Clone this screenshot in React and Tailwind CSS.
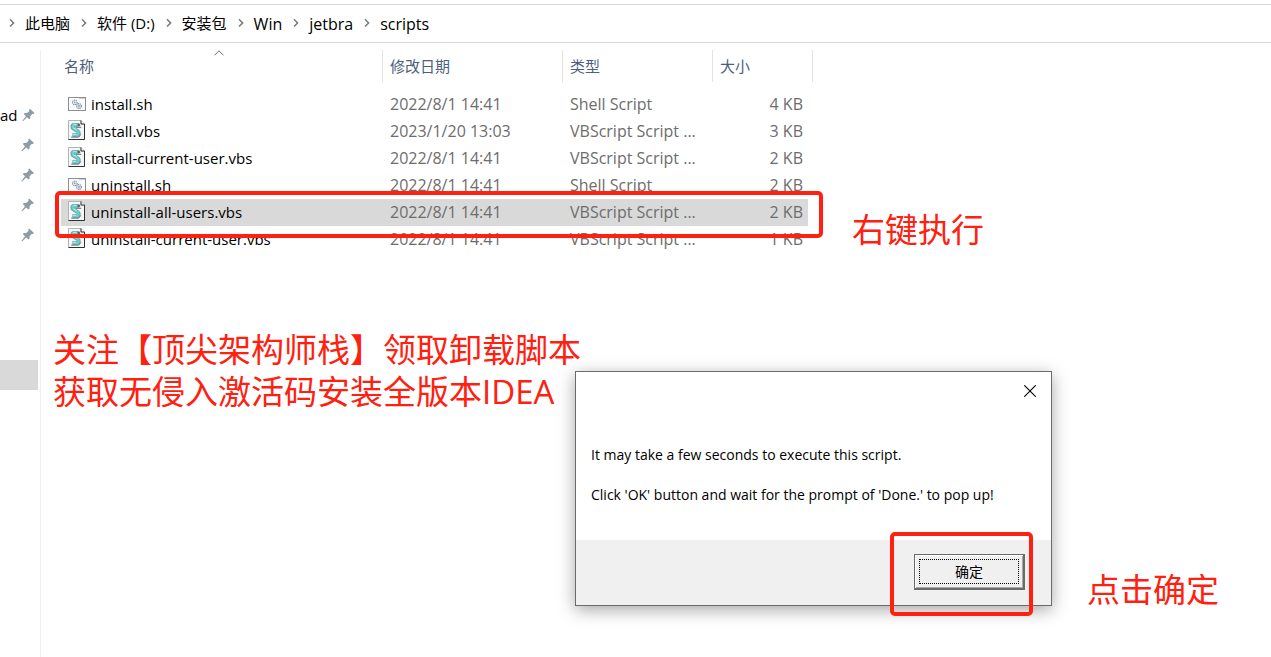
const FILES = [
  { name: 'install.sh', date: '2022/8/1 14:41', type: 'Shell Script', size: '4 KB', kind: 'sh' },
  { name: 'install.vbs', date: '2023/1/20 13:03', type: 'VBScript Script ...', size: '3 KB', kind: 'vbs' },
  { name: 'install-current-user.vbs', date: '2022/8/1 14:41', type: 'VBScript Script ...', size: '2 KB', kind: 'vbs' },
  { name: 'uninstall.sh', date: '2022/8/1 14:41', type: 'Shell Script', size: '2 KB', kind: 'sh' },
  { name: 'uninstall-all-users.vbs', date: '2022/8/1 14:41', type: 'VBScript Script ...', size: '2 KB', kind: 'vbs', selected: true },
  { name: 'uninstall-current-user.vbs', date: '2022/8/1 14:41', type: 'VBScript Script ...', size: '1 KB', kind: 'vbs' },
];

const CRUMBS = [
  { label: '此电脑', size: 'text-[15px]' },
  { label: '软件 (D:)', size: 'text-[15px]' },
  { label: '安装包', size: 'text-[15px]' },
  { label: 'Win', size: 'text-base' },
  { label: 'jetbra', size: 'text-base' },
  { label: 'scripts', size: 'text-base' },
];
const PINS = ['ad', '', '', '', ''];

function Chevron() {
  return (
    <svg className="h-3 w-[27px] shrink-0" viewBox="0 0 27 12" fill="none" stroke="#7a7a7a" strokeWidth="1.5" aria-hidden="true">
      <path d="M12 1.2 L15.6 4.9 L12 8.6" />
    </svg>
  );
}

function PinIcon() {
  return (
    <svg className="h-[14px] w-[14px]" viewBox="0 0 14 14" fill="#8f9ba5" aria-hidden="true">
      <path d="M8.2 0.6 L13 5 L11.8 6 L10.6 5.9 L8.6 8.2 L8.6 10.6 L7.5 11.5 L5.2 9.4 L1 13.4 L0.4 13 L4 8.2 L1.8 6 L2.8 5 L5.2 5 L7.6 2.8 L7.3 1.5 Z" />
    </svg>
  );
}

function ShellIcon() {
  return (
    <svg className="h-[23px] w-5" viewBox="0 0 20 23" fill="none" aria-hidden="true">
      <rect x="0.5" y="4.5" width="17" height="13" fill="#fbfbfb" stroke="#8a8f94" />
      <path d="M11.5 5.5h1M13.5 5.5h1M15.5 5.5h1" stroke="#9a9fa4" />
      <circle cx="6.8" cy="9.4" r="2.3" fill="#eef3f7" stroke="#7d8994" strokeDasharray="1.2 0.6" strokeWidth="1.1" />
      <circle cx="6.8" cy="9.4" r="0.8" fill="#8a97a3" />
      <circle cx="11" cy="13" r="2.4" fill="#dcebf7" stroke="#788ca0" strokeDasharray="1.2 0.6" strokeWidth="1.1" />
      <circle cx="11" cy="13" r="0.8" fill="#6c8299" />
    </svg>
  );
}

function VbsIcon() {
  return (
    <svg className="h-[23px] w-5" viewBox="0 0 20 23" fill="none" aria-hidden="true">
      <path d="M0.5 0.5 H13 L16.5 4 V19.5 H0.5 Z" fill="#f5f6f6" stroke="#b3b3b3" />
      <path d="M13 0.5 V4 H16.5" fill="#ffffff" stroke="#222222" />
      <path d="M16.5 4 V19.5 H0.5" stroke="#333333" />
      <path d="M11.4 4.8 H6 C3.8 5 3.8 7.6 5.6 8.6 L9.8 11.2 C11.4 12.6 11 14.2 9.6 14.8 H4.4" stroke="#7d9a9b" strokeWidth="3.8" />
      <path d="M10.4 4.8 H6 C4.2 5 4.2 7.4 5.8 8.4 L9.8 11 C11 12.4 10.8 14 9.6 14.8 H4.4" stroke="#5ed6d8" strokeWidth="2.3" />
      <path d="M5.4 4.3 H8.4 M5.4 7.8 L8.6 9.8 M4.6 14.2 H8.4" stroke="#c6f4f4" strokeWidth="0.9" />
      <path d="M7.6 7.3 H13.2 M3.2 17.1 H10.8 L12.8 14.4" stroke="#5d6f70" strokeWidth="1" />
      <path d="M9.6 5 H12.2" stroke="#34484a" strokeWidth="1.4" />
    </svg>
  );
}

function HeaderCell({ children, sorted, inset }) {
  return (
    <th scope="col" className="relative h-12 p-0 align-top font-normal">
      <div className={`mt-[7px] flex h-8 items-center border-r border-[#e2e2e2] text-left text-[15px] text-[#4c607a] ${inset}`}>
        {children}
      </div>
      {sorted && (
        <svg className="absolute top-[7px] left-[153px] h-[6px] w-[10px]" viewBox="0 0 10 6" fill="none" stroke="#6c6c6c" aria-hidden="true">
          <path d="M0.5 5.3 L5 0.8 L9.5 5.3" />
        </svg>
      )}
    </th>
  );
}

function FileTable() {
  return (
    <table className="w-[752px] table-fixed border-collapse text-base leading-[27px] text-[#6d6d6d]">
      <colgroup>
        <col className="w-[322px]" />
        <col className="w-[180px]" />
        <col className="w-[150px]" />
        <col className="w-[100px]" />
      </colgroup>
      <thead>
        <tr>
          <HeaderCell sorted inset="pl-[3px]">名称</HeaderCell>
          <HeaderCell inset="pl-[7px]">修改日期</HeaderCell>
          <HeaderCell inset="pl-[7px]">类型</HeaderCell>
          <HeaderCell inset="pl-[7px]">大小</HeaderCell>
        </tr>
      </thead>
      <tbody>
        {FILES.map((f) => {
          const bg = f.selected ? 'bg-[#d9d9d9]' : '';
          return (
            <tr key={f.name}>
              <td className={`p-0 ${bg}`}>
                <div className="flex h-[27px] items-center gap-[3px] pl-[7px] text-[15px] text-black">
                  {f.kind === 'sh' ? <ShellIcon /> : <VbsIcon />}
                  <span>{f.name}</span>
                </div>
              </td>
              <td className={`p-0 pl-[7px] ${bg}`}>{f.date}</td>
              <td className={`p-0 pl-[7px] ${bg}`}>{f.type}</td>
              <td className="p-0 pr-[5px]">
                <div className={`h-[27px] pr-[5px] text-right ${bg}`}>{f.size}</div>
              </td>
            </tr>
          );
        })}
      </tbody>
    </table>
  );
}

function Dialog() {
  return (
    <div
      role="dialog"
      aria-label="Script message"
      className="absolute top-[371px] left-[575px] flex w-[477px] flex-col border border-[#6b6b6b] bg-white shadow-[0_4px_16px_rgba(0,0,0,0.35)]"
    >
      <div className="flex justify-end px-[15px] pt-[13px]">
        <button type="button" aria-label="Close" className="h-3 w-3">
          <svg className="h-3 w-3" viewBox="0 0 12 12" stroke="#000000" strokeWidth="1.1" aria-hidden="true">
            <path d="M0.3 0.3 L11.7 11.7 M11.7 0.3 L0.3 11.7" />
          </svg>
        </button>
      </div>
      <div className="flex flex-col gap-5 px-[15px] pt-[48px] pb-[35px] text-sm leading-5 font-medium text-black">
        <p>It may take a few seconds to execute this script.</p>
        <p>Click 'OK' button and wait for the prompt of 'Done.' to pop up!</p>
      </div>
      <div className="flex justify-end bg-[#f0f0f0] pt-[14px] pr-[26px] pb-[15px]">
        <button
          type="button"
          className="h-9 w-[111px] border border-r-2 border-b-2 border-[#6b6b6b] bg-[#f0f0f0] p-1 text-sm text-black shadow-[inset_1px_1px_0_#ffffff,inset_-1px_-1px_0_#a8a8a8]"
        >
          <span className="flex h-full items-center justify-center border border-dotted border-black">确定</span>
        </button>
      </div>
    </div>
  );
}

export default function App() {
  return (
    <div className="relative flex min-h-screen flex-col overflow-hidden bg-white font-['Open_Sans','Noto_Sans_CJK_SC',sans-serif] text-black">
      <nav aria-label="Path" className="mt-1 -ml-0.5 flex h-[39px] items-center border-y border-[#d9d9d9]">
        {CRUMBS.map((c) => (
          <div key={c.label} className="flex items-center">
            <Chevron />
            <a href="#" className={`whitespace-nowrap ${c.size}`}>{c.label}</a>
          </div>
        ))}
      </nav>

      <div className="flex flex-1">
        <aside className="mt-[7px] w-[41px] shrink-0 border-r border-[#f0f0f0] pt-[50px]">
          <ul>
            {PINS.map((p, i) => (
              <li key={i} className="flex h-[30px] items-center justify-end gap-1 pr-[5px] text-[15px]">
                {p && <span>{p}</span>}
                <PinIcon />
              </li>
            ))}
          </ul>
          <div className="mt-[110px] h-[30px] w-[38px] bg-[#d9d9d9]" />
        </aside>
        <main className="flex-1 pl-5">
          <FileTable />
        </main>
      </div>

      <div className="absolute top-[191px] left-[55px] h-[47px] w-[768px] rounded-[5px] border-4 border-[#ff2010]" />
      <p className="absolute top-[209px] left-[852px] text-[33px] leading-[42px] whitespace-nowrap text-[#ff2010]">右键执行</p>
      <p className="absolute top-[329px] left-[53px] text-[33px] leading-[42px] whitespace-nowrap text-[#ff2010]">
        关注【顶尖架构师栈】领取卸载脚本
        <br />
        获取无侵入激活码安装全版本IDEA
      </p>

      <Dialog />

      <div className="absolute top-[532px] left-[890px] h-[84px] w-[143px] rounded-[5px] border-4 border-[#ff2010]" />
      <p className="absolute top-[569px] left-[1087px] text-[33px] leading-[42px] whitespace-nowrap text-[#ff2010]">点击确定</p>
    </div>
  );
}
